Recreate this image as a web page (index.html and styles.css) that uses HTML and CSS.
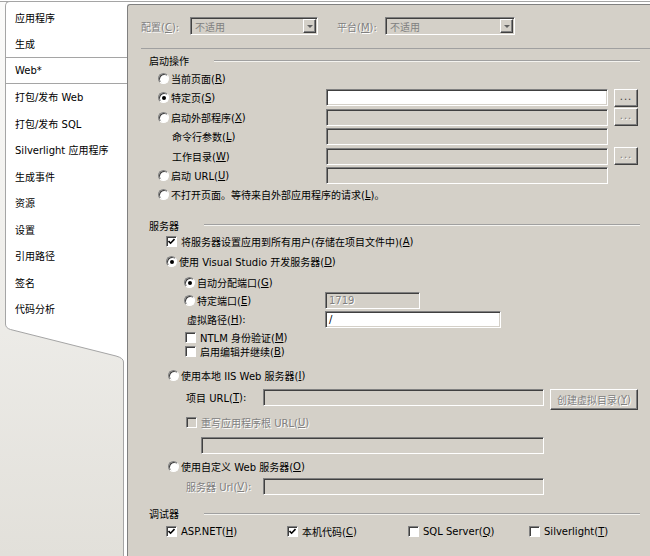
FILE: index.html
```html
<!DOCTYPE html>
<html lang="zh-CN">
<head>
  <meta charset="UTF-8" />
  <title>Web 属性</title>
  <link rel="stylesheet" href="styles.css">
</head>
<body>
<div class="window">
  <!-- tab strip -->
  <div class="sidebar">
    <ul class="tabs">
      <li>应用程序</li>
      <li>生成</li>
      <li class="active">Web*</li>
      <li>打包/发布 Web</li>
      <li>打包/发布 SQL</li>
      <li>Silverlight 应用程序</li>
      <li>生成事件</li>
      <li>资源</li>
      <li>设置</li>
      <li>引用路径</li>
      <li>签名</li>
      <li>代码分析</li>
    </ul>
    <svg class="tabs-end" width="127" height="40" viewBox="0 0 127 40">
      <path d="M5.5 0 V2 Q5.5 6 10.5 7.5 L116 34 Q123.5 36 123.5 40 H127 V0 Z" fill="#fff"/>
      <path d="M5.5 0 V2 Q5.5 6 10.5 7.5 L116 34 Q123.5 36 123.5 40" fill="none" stroke="#a5a5a5"/>
    </svg>
    <div class="tabs-rest"></div>
  </div>

  <!-- property page -->
  <div class="page">
    <div class="topbar">
      <span class="dim cfg-label">配置(<u>C</u>):</span>
      <div class="combo"><span>不适用</span><b class="drop"></b></div>
      <span class="dim plat-label">平台(<u>M</u>):</span>
      <div class="combo wide"><span>不适用</span><b class="drop"></b></div>
    </div>
    <div class="sep"></div>

    <div class="group-title">启动操作</div>
    <div class="startup">
      <div class="row"><span class="opt"><i class="radio"></i>当前页面(<u>R</u>)</span></div>
      <div class="row">
        <span class="opt"><i class="radio on"></i>特定页(<u>S</u>)</span>
        <div class="tb on"></div>
        <div class="btn more">...</div>
      </div>
      <div class="row">
        <span class="opt"><i class="radio"></i>启动外部程序(<u>X</u>)</span>
        <div class="tb"></div>
        <div class="btn more dim">...</div>
      </div>
      <div class="row">
        <span class="opt sub">命令行参数(<u>L</u>)</span>
        <div class="tb"></div>
      </div>
      <div class="row">
        <span class="opt sub">工作目录(<u>W</u>)</span>
        <div class="tb"></div>
        <div class="btn more dim">...</div>
      </div>
      <div class="row">
        <span class="opt"><i class="radio"></i>启动 URL(<u>U</u>)</span>
        <div class="tb"></div>
      </div>
      <div class="row"><span class="opt"><i class="radio"></i>不打开页面。等待来自外部应用程序的请求(<u>L</u>)。</span></div>
    </div>

    <div class="group-title gap">服务器</div>
    <div class="server">
      <div class="row lv1"><i class="check on"><svg width="7" height="7" viewBox="0 0 7 7"><path d="M0.5 3 L2.6 5.2 L6.5 1" fill="none" stroke="#000" stroke-width="1.6"/></svg></i>将服务器设置应用到所有用户(存储在项目文件中)(<u>A</u>)</div>
      <div class="row lv1"><i class="radio on"></i>使用 Visual Studio 开发服务器(<u>D</u>)</div>
      <div class="row lv2"><i class="radio on"></i>自动分配端口(<u>G</u>)</div>
      <div class="row lv2">
        <span class="opt port-label"><i class="radio"></i>特定端口(<u>E</u>)</span>
        <div class="tb port"><span class="dim">1719</span></div>
      </div>
      <div class="row lv2-text">
        <span class="opt vpath-label">虚拟路径(<u>H</u>):</span>
        <div class="tb on vpath">/</div>
      </div>
      <div class="row lv2-box"><i class="check"></i>NTLM 身份验证(<u>M</u>)</div>
      <div class="row lv2-box"><i class="check"></i>启用编辑并继续(<u>B</u>)</div>
      <div class="row lv1-alt iis"><i class="radio"></i>使用本地 IIS Web 服务器(<u>I</u>)</div>
      <div class="row lv2-label top">
        <span class="opt url-label">项目 URL(<u>T</u>):</span>
        <div class="tb url"></div>
        <div class="btn vdir dim">创建虚拟目录(<u>Y</u>)</div>
      </div>
      <div class="row lv2-label dim"><i class="check off"></i>重写应用程序根 URL(<u>U</u>)</div>
      <div class="row lv3 top"><div class="tb root"></div></div>
      <div class="row lv1-alt"><i class="radio"></i>使用自定义 Web 服务器(<u>O</u>)</div>
      <div class="row lv2-label">
        <span class="opt url-label dim">服务器 Url(<u>V</u>):</span>
        <div class="tb url"></div>
      </div>
    </div>

    <div class="group-title debug">调试器</div>
    <div class="row debuggers">
      <span class="dbg"><i class="check on"><svg width="7" height="7" viewBox="0 0 7 7"><path d="M0.5 3 L2.6 5.2 L6.5 1" fill="none" stroke="#000" stroke-width="1.6"/></svg></i>ASP.NET(<u>H</u>)</span>
      <span class="dbg"><i class="check on"><svg width="7" height="7" viewBox="0 0 7 7"><path d="M0.5 3 L2.6 5.2 L6.5 1" fill="none" stroke="#000" stroke-width="1.6"/></svg></i>本机代码(<u>C</u>)</span>
      <span class="dbg"><i class="check"></i>SQL Server(<u>Q</u>)</span>
      <span class="dbg"><i class="check"></i>Silverlight(<u>T</u>)</span>
    </div>
  </div>
</div>
</body>
</html>
```

FILE: styles.css
```css
body {
  margin: 0;
  width: 650px;
  height: 556px;
  overflow: hidden;
  font-family: "DejaVu Sans", "Noto Sans CJK SC", sans-serif;
  font-size: 10px;
  color: #000;
  background: #fff;
}

u {
  text-decoration: underline;
}

.window {
  display: flex;
  height: 555px;
  margin-top: 1px;
  border-top: 1px solid #a5a5a5;
  box-sizing: border-box;
}

/* tab strip */
.sidebar {
  width: 127px;
  flex: none;
  display: flex;
  flex-direction: column;
  background: linear-gradient(#fbfbfa, #e2e0da);
}

.tabs {
  list-style: none;
  margin: -1px 0 0 5px;
  padding: 2px 0 0;
  background: #fff;
  border-top: 1px solid #a5a5a5;
  border-left: 1px solid #a5a5a5;
  border-top-left-radius: 5px;
}

.tabs li {
  height: 26.5px;
  box-sizing: border-box;
  display: flex;
  align-items: center;
  padding-left: 9px;
  white-space: nowrap;
}

.tabs li.active {
  border-top: 1px solid #a5a5a5;
  border-bottom: 1px solid #a5a5a5;
}

.tabs-end {
  display: block;
  flex: none;
}

.tabs-rest {
  flex: 1;
  margin-left: 123px;
  border-left: 1px solid #a5a5a5;
  background: #fff;
}

/* page */
.page {
  flex: 1;
  margin-top: 2px;
  background: #d4d0c8;
  border-top: 1px solid #808080;
  border-left: 1px solid #808080;
  border-top-left-radius: 3px;
}

.dim {
  color: #808080;
  text-shadow: 1px 1px 0 #fff;
}

.topbar {
  display: flex;
  align-items: center;
  height: 18px;
  margin-top: 12px;
  padding-left: 13px;
}

.cfg-label {
  width: 49px;
}

.plat-label {
  width: 48px;
  margin-left: 19px;
}

.combo {
  width: 128px;
  height: 18px;
  box-sizing: border-box;
  display: flex;
  align-items: center;
  justify-content: space-between;
  padding: 0 1px 0 4px;
  color: #808080;
  border: 1px solid;
  border-color: #808080 #fff #fff #808080;
  box-shadow: inset 1px 1px #404040;
}

.combo.wide {
  width: 130px;
}

.drop {
  width: 13px;
  height: 14px;
  box-sizing: border-box;
  display: flex;
  align-items: center;
  justify-content: center;
  border: 1px solid;
  border-color: #fff #404040 #404040 #fff;
  box-shadow: inset -1px -1px #808080;
}

.drop::after {
  content: "";
  border-left: 3px solid transparent;
  border-right: 3px solid transparent;
  border-top: 3px solid #606060;
}

.sep {
  margin: 13px 0 0 13px;
  border-top: 1px solid #a0a0a0;
}

.group-title {
  display: flex;
  align-items: center;
  height: 17px;
  margin-top: 3px;
  padding: 0 10px 0 21px;
}

.group-title::after {
  content: "";
  flex: 1;
  margin-left: 25px;
  border-top: 1px solid #a0a0a0;
  border-bottom: 1px solid #f4f3ef;
}

.group-title.gap {
  margin-top: 13px;
}

.group-title.debug {
  margin-top: 10px;
}

.row {
  display: flex;
  align-items: center;
  white-space: nowrap;
}

.opt {
  display: flex;
  align-items: center;
  box-sizing: border-box;
  flex: none;
}

/* start action */
.startup {
  display: grid;
  grid-template-rows: 19px repeat(5, 19.5px) 18px;
}

.startup .opt {
  width: 198px;
  padding-left: 30px;
}

.startup .row:first-child .opt,
.startup .row:last-child .opt {
  width: auto;
}

.startup .opt.sub {
  padding-left: 44px;
}

.tb {
  width: 282px;
  height: 17px;
  box-sizing: border-box;
  flex: none;
  display: flex;
  align-items: center;
  padding-left: 3px;
  background: #d4d0c8;
  border: 1px solid;
  border-color: #808080 #fff #fff #808080;
  box-shadow: inset 1px 1px #404040, inset -1px -1px #d4d0c8;
}

.tb.on {
  background: #fff;
}

.btn {
  box-sizing: border-box;
  display: flex;
  align-items: center;
  justify-content: center;
  flex: none;
  background: #d4d0c8;
  border: 1px solid;
  border-color: #fff #404040 #404040 #fff;
  box-shadow: inset -1px -1px #808080;
}

.btn.more {
  width: 24px;
  height: 18px;
  margin-left: 6px;
  padding-bottom: 3px;
  letter-spacing: 1px;
  color: #404040;
}

.btn.more.dim {
  color: #808080;
}

/* server */
.server {
  display: grid;
  grid-template-rows: 16px 24px 18px 18px 20px 15px 14px 24.5px 27px 24px 21px 22px 18px;
}

.lv1 { padding-left: 38px; }
.lv1-alt { padding-left: 40px; }
.lv2 { padding-left: 56px; }
.lv2-box { padding-left: 57px; }
.lv2-label { padding-left: 58px; }
.lv2-text { padding-left: 59px; }
.lv3 { padding-left: 73px; }

.row.iis {
  padding-top: 8.5px;
}

.row.top {
  align-items: flex-start;
  padding-top: 6px;
}

.row.lv3.top {
  padding-top: 3px;
}

.row.top .opt {
  height: 17px;
}

.port-label { width: 141px; }
.vpath-label { width: 138px; }
.url-label { width: 77px; }

.tb.port { width: 95px; }
.tb.vpath { width: 176px; }
.tb.url { width: 281px; }
.tb.root { width: 343px; }

.btn.vdir {
  width: 88px;
  height: 21px;
  margin-left: 6px;
}

/* radio and check boxes */
.radio {
  width: 11px;
  height: 11px;
  box-sizing: border-box;
  flex: none;
  display: flex;
  align-items: center;
  justify-content: center;
  margin-right: 2px;
  border-radius: 50%;
  background: #fff;
  border: 1px solid;
  border-color: #808080 #fff #fff #808080;
  box-shadow: inset 1px 1px #404040;
}

.radio.on::after {
  content: "";
  width: 4px;
  height: 4px;
  border-radius: 50%;
  background: #000;
}

.check {
  width: 11px;
  height: 11px;
  box-sizing: border-box;
  flex: none;
  display: flex;
  align-items: center;
  justify-content: center;
  margin-right: 4px;
  background: #fff;
  border: 1px solid;
  border-color: #808080 #fff #fff #808080;
  box-shadow: inset 1px 1px #404040;
}

.check.off {
  background: #d4d0c8;
}

.debuggers {
  height: 18px;
  padding-left: 38px;
}

.dbg {
  width: 121px;
  display: flex;
  align-items: center;
}
```
